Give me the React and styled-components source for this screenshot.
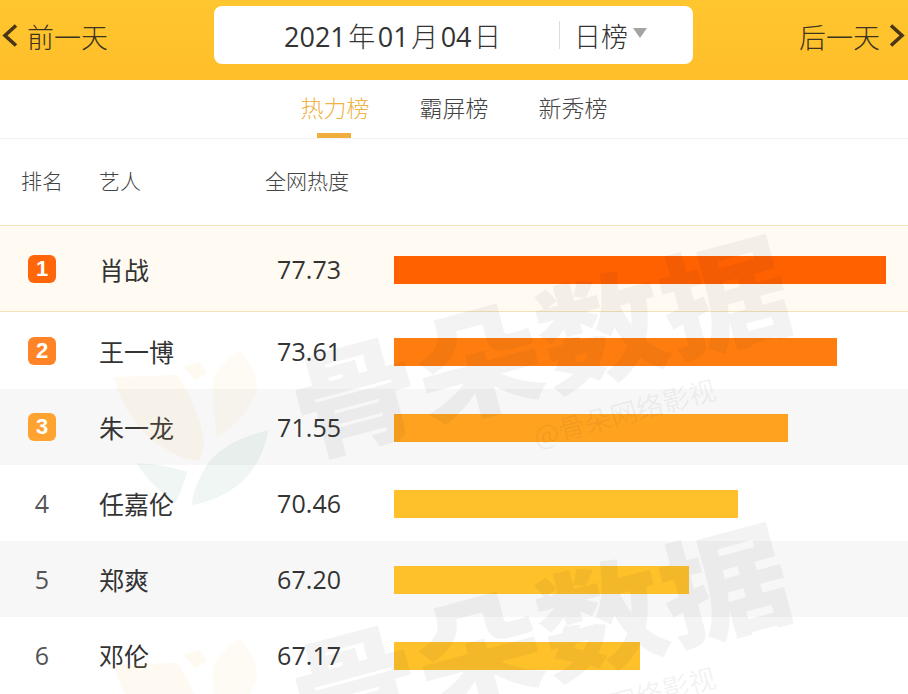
import React from "react";
import styled, { createGlobalStyle } from "styled-components";

const Global = createGlobalStyle`
  html, body { margin: 0; padding: 0; background: #fff; }
  body { font-family: "Open Sans", "Noto Sans CJK SC", sans-serif; color: #333; overflow: hidden; }
`;
const Page = styled.div`
  position: relative; width: 908px; height: 694px; overflow: hidden;
`;
const TopBar = styled.header`
  height: 80px; display: grid; grid-template-columns: 214px 479px 1fr; align-items: start;
  background: linear-gradient(#ffc62f, #ffc12b 70%, #febe29);
`;
const DayLink = styled.div`
  display: flex; align-items: center; gap: 9px; height: 72px; font-size: 27px; color: #3d3320;
  justify-content: ${p => (p.$next ? "flex-end" : "flex-start")};
  padding: 0 ${p => (p.$next ? "3px" : "0")} 0 ${p => (p.$next ? "0" : "2px")};
  font-family: "Noto Sans CJK SC", sans-serif; font-weight: 300;
`;
const DateBox = styled.div`
  margin-top: 6px; height: 58px; background: #fff; border-radius: 8px;
  display: flex; align-items: center; font-size: 27px; color: #333;
`;
const DateText = styled.div`
  width: 345px; box-sizing: border-box; padding-left: 70px; flex: none;
  font-family: "Open Sans", "Noto Sans CJK SC", sans-serif; white-space: nowrap;
  span { font-family: "Noto Sans CJK SC", sans-serif; font-weight: 300; margin: 0 2.5px; }
`;
const Divider = styled.div`width: 1px; height: 28px; background: #ddd; flex: none;`;
const Mode = styled.div`
  margin-left: 14px; display: flex; align-items: center; gap: 5px;
  font-family: "Noto Sans CJK SC", sans-serif; font-weight: 300; color: #333;
`;
const Caret = styled.i`
  width: 0; height: 0; margin-top: -5px; border-left: 7px solid transparent; border-right: 7px solid transparent;
  border-top: 10px solid #a3a3a3;
`;
const Tabs = styled.nav`
  height: 58px; display: flex; justify-content: center; gap: 50px; border-bottom: 1px solid #f2f2f2;
`;
const Tab = styled.div`
  position: relative; width: 69px; text-align: center; line-height: 55px; font-size: 23px; font-weight: 300;
  font-family: "Noto Sans CJK SC", sans-serif; color: ${p => (p.$active ? "#f0b247" : "#444")};
  white-space: nowrap;
  ${p => p.$active && `&::after { content: ""; position: absolute; left: 16px; bottom: 0; width: 34px; height: 5px; background: #f0ae3c; }`}
`;
const Cols = "grid-template-columns: 84px 166px 144px 1fr;";
const Head = styled.div`
  display: grid; ${Cols} height: 86px; padding-bottom: 4px; box-sizing: border-box; align-items: center;
  font-size: 21px; color: #444; font-weight: 300;
  font-family: "Noto Sans CJK SC", sans-serif;
`;
const RankHead = styled.div`text-align: center; white-space: nowrap;`;
const ArtistHead = styled.div`padding-left: 15px;`;
const HeatHead = styled.div`text-align: center; white-space: nowrap; width: 84px; margin-left: 15px;`;
const Row = styled.div`
  display: grid; ${Cols} align-items: center; box-sizing: border-box;
  height: ${p => p.$h}px; background: ${p => p.$bg};
  ${p => p.$first && "border-top: 1px solid #f5e2b8; border-bottom: 1px solid #f5e2b8;"}
`;
const RankCell = styled.div`display: flex; justify-content: center;`;
const Badge = styled.span`
  width: 28px; height: 28px; border-radius: 6px; background: ${p => p.$c}; color: #fff; text-align: center;
  font: bold 22px/28px "Liberation Sans", sans-serif; opacity: .96;
`;
const Plain = styled.span`font-size: 25px; color: #555; line-height: 28px;`;
const Name = styled.div`
  padding-left: 15px; font-size: 25px; font-weight: 400; color: #333;
  font-family: "Noto Sans CJK SC", sans-serif; white-space: nowrap;
`;
const Score = styled.div`font-size: 25px; color: #333; padding-left: 27px; letter-spacing: 0.1px;`;
const BarTrack = styled.div`padding: 2px 22px 0 0;`;
const Bar = styled.div`height: 28px; background: ${p => p.$c};`;

const Arrow = ({ left }) => (
  <svg width="16" height="24" viewBox="0 0 16 24" fill="none" stroke="#4a3516" strokeWidth="3.6">
    <path d={left ? "M14 1.5 L3 11.5 L14 21.5" : "M2 1.5 L13 11.5 L2 21.5"} />
  </svg>
);

const Mark = styled.div`
  position: absolute; left: ${p => p.$x}px; top: ${p => p.$y}px; pointer-events: none; white-space: nowrap;
  line-height: 1;
`;
const MarkBig = styled(Mark)`
  font-family: "Noto Sans CJK SC", sans-serif; font-weight: 900; font-size: 116px; color: rgba(30,30,30,.055);
  transform: translate(-50%, -50%) rotate(-15deg) scaleX(1.1);
`;
const MarkSmall = styled(Mark)`
  font-family: "Noto Sans CJK SC", sans-serif; font-size: 27px; color: rgba(60,60,60,.07);
  transform: translate(-50%, -50%) rotate(-15deg);
`;
const Leaf = styled.svg`position: absolute; left: 100px; top: ${p => p.$y}px; pointer-events: none;`;
const Logo = ({ y }) => (
  <Leaf $y={y} width="200" height="200" viewBox="0 0 600 600">
    <path d="M42 142 L232 134 C270 190 305 270 312 345 L300 392 C210 390 80 300 42 142Z" fill="rgba(248,205,110,.09)" />
    <path d="M248 112 L300 95 L322 132 L285 150Z" fill="rgba(248,205,110,.09)" />
    <path d="M340 140 C365 105 395 75 420 60 C450 100 475 140 470 175 C462 230 405 290 350 322 C345 260 335 190 340 140Z" fill="rgba(248,205,110,.08)" />
    <path d="M505 300 C430 320 350 350 312 420 C292 455 278 490 275 525 C370 510 480 450 505 300Z" fill="rgba(70,140,110,.08)" />
    <path d="M110 400 C160 400 215 412 262 425 C250 465 235 505 225 520 C190 495 140 450 110 400Z" fill="rgba(70,140,110,.08)" />
  </Leaf>
);

const data = [
  ["肖战", "77.73", 492, "#ff6000"],
  ["王一博", "73.61", 443, "#ff7d0e"],
  ["朱一龙", "71.55", 394, "#ffa21f"],
  ["任嘉伦", "70.46", 344, "#ffc12a"],
  ["郑爽", "67.20", 295, "#ffc12a"],
  ["邓伦", "67.17", 246, "#ffc12a"],
];
const rowH = [87, 77, 76, 76, 76, 76];
const rowBg = ["#fffaf2", "#fff", "#f7f7f7", "#fff", "#f7f7f7", "#fff"];
const badge = ["#ff6000", "#ff8020", "#ffa028"];

export default function App() {
  return (
    <Page>
      <Global />
      <TopBar>
        <DayLink><Arrow left />前一天</DayLink>
        <DateBox>
          <DateText>2021<span>年</span>01<span>月</span>04<span>日</span></DateText>
          <Divider />
          <Mode>日榜<Caret /></Mode>
        </DateBox>
        <DayLink $next>后一天<Arrow /></DayLink>
      </TopBar>
      <Tabs>
        <Tab $active>热力榜</Tab>
        <Tab>霸屏榜</Tab>
        <Tab>新秀榜</Tab>
      </Tabs>
      <Head>
        <RankHead>排名</RankHead>
        <ArtistHead>艺人</ArtistHead>
        <HeatHead>全网热度</HeatHead>
      </Head>
      {data.map(([name, score, w, c], i) => (
        <Row key={name} $h={rowH[i]} $bg={rowBg[i]} $first={i === 0}>
          <RankCell>{i < 3 ? <Badge $c={badge[i]}>{i + 1}</Badge> : <Plain>{i + 1}</Plain>}</RankCell>
          <Name>{name}</Name>
          <Score>{score}</Score>
          <BarTrack><Bar $c={c} style={{ width: w }} /></BarTrack>
        </Row>
      ))}
      <Logo y={330} />
      <Logo y={618} />
      <MarkBig $x={538} $y={340}>骨朵数据</MarkBig>
      <MarkBig $x={538} $y={628}>骨朵数据</MarkBig>
      <MarkSmall $x={624} $y={412}>@骨朵网络影视</MarkSmall>
      <MarkSmall $x={624} $y={700}>@骨朵网络影视</MarkSmall>
    </Page>
  );
}
